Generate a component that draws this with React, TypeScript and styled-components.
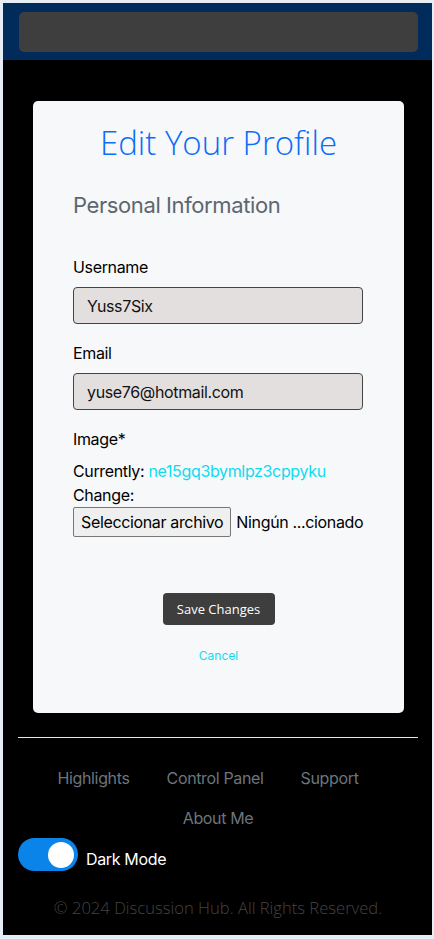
import React from "react";
import styled, { createGlobalStyle } from "styled-components";

const GlobalStyle = createGlobalStyle`
	html, body {
		margin: 0;
		padding: 0;
		background: #e7edf5;
	}
	body {
		font-family: Inter, "Liberation Sans", sans-serif;
		letter-spacing: -0.35px;
	}
	* {
		box-sizing: border-box;
	}
`;

const Frame = styled.div`
	margin: 3px 2px 4px 3px;
	background: #000;
	height: 932px;
	display: flex;
	flex-direction: column;
`;

const Header = styled.header`
	background: #002b5b;
	height: 57px;
	padding: 9px 14px 0 16px;
`;

const SearchBar = styled.div`
	height: 40px;
	background: #3e3e3e;
	border-radius: 5px;
`;

const Main = styled.main`
	padding: 41px 28px 0 30px;
`;

const Card = styled.section`
	background: #f7f8fa;
	border-radius: 5px;
	height: 612px;
	padding: 20px 40px 0 40px;
	display: flex;
	flex-direction: column;
`;

const Title = styled.h1`
	margin: 0;
	text-align: center;
	font-family: "Open Sans", sans-serif;
	font-weight: 300;
	font-size: 33px;
	line-height: 44px;
	letter-spacing: 0;
	color: #0b6cf5;
`;

const Subtitle = styled.h2`
	margin: 25px 0 0;
	font-family: Inter, sans-serif;
	font-weight: 400;
	font-size: 22px;
	line-height: 30px;
	letter-spacing: -0.4px;
	color: #5e666e;
`;

const Field = styled.div<{ $top: number }>`
	display: flex;
	flex-direction: column;
	margin-top: ${(p) => p.$top}px;
`;

const Label = styled.label`
	font-size: 16px;
	line-height: 20px;
	color: #000;
`;

const Input = styled.input`
	margin-top: 10px;
	width: 290px;
	height: 37px;
	background: #e4dfdf;
	border: 1px solid #444;
	border-radius: 4px;
	padding: 0 13px;
	font-family: Inter, sans-serif;
	font-size: 16px;
	letter-spacing: -0.35px;
	color: #111;
	outline: none;
`;

const Line = styled.div<{ $top?: number }>`
	margin-top: ${(p) => p.$top ?? 0}px;
	font-size: 16px;
	line-height: 24px;
	color: #000;
	white-space: nowrap;
`;

const FileLink = styled.a`
	color: #0ddcf0;
	text-decoration: none;
`;

const FileRow = styled.div`
	display: flex;
	align-items: center;
	gap: 5px;
	font-size: 16px;
	white-space: nowrap;
`;

const FileButton = styled.button`
	height: 30px;
	padding: 0 7px;
	background: #efefef;
	border: 1px solid #767676;
	border-radius: 2px;
	font-family: Inter, sans-serif;
	font-size: 16px;
	letter-spacing: -0.35px;
	color: #000;
`;

const Actions = styled.div`
	display: flex;
	flex-direction: column;
	align-items: center;
	margin-top: 56px;
`;

const SaveButton = styled.button`
	width: 112px;
	height: 32px;
	background: #3e3e3e;
	color: #fff;
	border: none;
	border-radius: 4px;
	font-family: "Open Sans", sans-serif;
	font-size: 13px;
	letter-spacing: 0;
`;

const CancelLink = styled.a`
	margin-top: 23px;
	font-family: Inter, sans-serif;
	font-size: 12px;
	letter-spacing: 0;
	color: #0ddcf0;
	text-decoration: none;
`;

const Footer = styled.footer`
	padding: 24px 14px 0 15px;
	display: flex;
	flex-direction: column;
`;

const Rule = styled.hr`
	margin: 0;
	border: none;
	border-top: 1px solid #e6e6e6;
`;

const Links = styled.nav`
	margin-top: 28px;
	display: flex;
	flex-wrap: wrap;
	justify-content: center;
	column-gap: 37px;
	row-gap: 16px;
	padding: 0 50px 0 30px;
`;

const FootLink = styled.a<{ $shift?: number }>`
	margin-left: ${(p) => p.$shift ?? 0}px;
	font-size: 16px;
	line-height: 24px;
	color: #6c757d;
	text-decoration: none;
`;

const ToggleRow = styled.div`
	display: flex;
	align-items: center;
	gap: 8px;
	margin-top: 8px;
`;

const Switch = styled.span`
	width: 60px;
	height: 33px;
	border-radius: 17px;
	background: #0a84e8;
	display: flex;
	align-items: center;
	justify-content: flex-end;
	padding-right: 4px;
`;

const Knob = styled.span`
	width: 26px;
	height: 26px;
	border-radius: 50%;
	background: #fff;
`;

const ToggleLabel = styled.span`
	padding-top: 8px;
	font-size: 16px;
	color: #fff;
`;

const Copyright = styled.p`
	margin: 25px 0 0;
	text-align: center;
	font-family: "Open Sans", sans-serif;
	font-weight: 300;
	font-size: 16.6px;
	letter-spacing: 0;
	color: #444;
`;

const App = () => {
	return (
		<>
			<GlobalStyle />
			<Frame>
				<Header>
					<SearchBar />
				</Header>
				<Main>
					<Card>
						<Title>Edit Your Profile</Title>
						<Subtitle>Personal Information</Subtitle>
						<Field $top={37}>
							<Label>Username</Label>
							<Input defaultValue="Yuss7Six" />
						</Field>
						<Field $top={19}>
							<Label>Email</Label>
							<Input defaultValue="yuse76@hotmail.com" />
						</Field>
						<Field $top={19}>
							<Label>Image*</Label>
							<Line $top={10}>
								Currently: <FileLink href="#">ne15gq3bymlpz3cppyku</FileLink>
							</Line>
							<Line>Change:</Line>
							<FileRow>
								<FileButton type="button">Seleccionar archivo</FileButton>
								<span>Ningún ...cionado</span>
							</FileRow>
						</Field>
						<Actions>
							<SaveButton type="button">Save Changes</SaveButton>
							<CancelLink href="#">Cancel</CancelLink>
						</Actions>
					</Card>
				</Main>
				<Footer>
					<Rule />
					<Links>
						<FootLink href="#">Highlights</FootLink>
						<FootLink href="#">Control Panel</FootLink>
						<FootLink href="#">Support</FootLink>
						<FootLink href="#" $shift={20}>
							About Me
						</FootLink>
					</Links>
					<ToggleRow>
						<Switch>
							<Knob />
						</Switch>
						<ToggleLabel>Dark Mode</ToggleLabel>
					</ToggleRow>
					<Copyright>© 2024 Discussion Hub. All Rights Reserved.</Copyright>
				</Footer>
			</Frame>
		</>
	);
};

export default App;
